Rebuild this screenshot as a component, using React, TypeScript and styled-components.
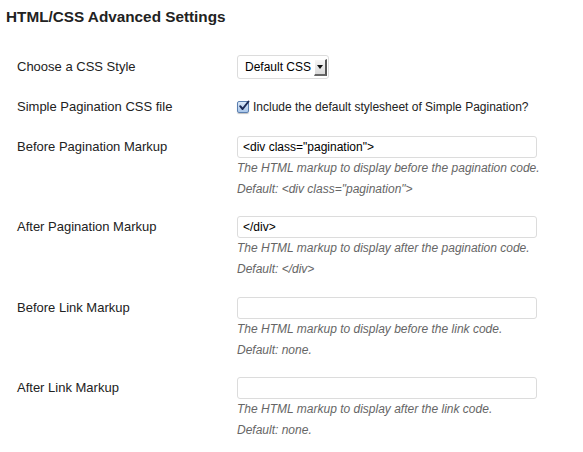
import React from 'react';
import styled, { createGlobalStyle } from 'styled-components';

const GlobalStyle = createGlobalStyle`
  body {
    margin: 0;
    background: #fff;
    font-family: 'Liberation Sans', Arial, sans-serif;
    color: #222;
  }
`;

const Page = styled.div`
  width: 583px;
  height: 452px;
  padding: 6px 6px 0 6px;
  box-sizing: border-box;
  overflow: hidden;
`;

const Title = styled.h3`
  margin: 0 0 19px 0;
  font-size: 15.3px;
  line-height: 22px;
  font-weight: 700;
  color: #222;
`;

const Row = styled.div`
  display: grid;
  grid-template-columns: 231px 1fr;
  padding: 8px 0 8.4px;
`;

const Label = styled.div<{ $lh?: number }>`
  padding-left: 11px;
  font-size: 13px;
  line-height: ${(p) => p.$lh ?? 22}px;
  color: #222;
`;

const Field = styled.div`
  display: flex;
  flex-direction: column;
`;

const SelectBox = styled.div`
  display: inline-flex;
  align-items: center;
  align-self: flex-start;
  height: 24px;
  box-sizing: border-box;
  padding: 0 1px 0 7px;
  border: 1px solid #dcdcdc;
  border-radius: 3px;
  background: #fff;
  font-size: 12px;
  color: #000;
  gap: 3px;
`;

const Arrow = styled.span`
  width: 13px;
  height: 17px;
  box-sizing: border-box;
  display: flex;
  align-items: center;
  justify-content: center;
  background: linear-gradient(#f6f6f6, #d9d9d9);
  border-right: 2px solid #555;
  border-bottom: 2px solid #666;
  border-top: 1px solid #fff;
  border-left: 1px solid #fff;
`;

const CheckLine = styled.label`
  display: flex;
  align-items: center;
  gap: 4px;
  height: 24px;
  font-size: 12px;
  color: #222;
`;

const CheckBox = styled.span`
  width: 12px;
  height: 12px;
  box-sizing: border-box;
  border: 1px solid #5b7fb0;
  border-radius: 2px;
  background: linear-gradient(#dbe8f8, #a9c6ea);
  position: relative;
  box-shadow: 0 1px 1px rgba(0, 0, 0, 0.25);
`;

const TextInput = styled.input`
  width: 300px;
  height: 22px;
  box-sizing: border-box;
  margin: 0;
  padding: 0 5px;
  border: 1px solid #dcdcdc;
  border-radius: 3px;
  font-family: 'Liberation Sans', Arial, sans-serif;
  font-size: 12px;
  color: #000;
  background: #fff;
  outline: none;
`;

const Description = styled.p`
  margin: 0;
  font-size: 12px;
  line-height: 21px;
  font-style: italic;
  color: #666;
`;

type MarkupRow = {
  label: string;
  value: string;
  text: string;
  def: string;
};

const rows: MarkupRow[] = [
  {
    label: 'Before Pagination Markup',
    value: '<div class="pagination">',
    text: 'The HTML markup to display before the pagination code.',
    def: 'Default: <div class="pagination">',
  },
  {
    label: 'After Pagination Markup',
    value: '</div>',
    text: 'The HTML markup to display after the pagination code.',
    def: 'Default: </div>',
  },
  {
    label: 'Before Link Markup',
    value: '',
    text: 'The HTML markup to display before the link code.',
    def: 'Default: none.',
  },
  {
    label: 'After Link Markup',
    value: '',
    text: 'The HTML markup to display after the link code.',
    def: 'Default: none.',
  },
];

export default function App() {
  return (
    <>
      <GlobalStyle />
      <Page>
        <Title>HTML/CSS Advanced Settings</Title>

        <Row>
          <Label $lh={24}>Choose a CSS Style</Label>
          <Field>
            <SelectBox>
              Default CSS
              <Arrow>
                <svg width="6" height="4" viewBox="0 0 6 4">
                  <path d="M0 0 L6 0 L3 4 Z" fill="#111" />
                </svg>
              </Arrow>
            </SelectBox>
          </Field>
        </Row>

        <Row>
          <Label $lh={24}>Simple Pagination CSS file</Label>
          <Field>
            <CheckLine>
              <CheckBox>
                <svg
                  width="12"
                  height="12"
                  viewBox="0 0 12 12"
                  style={{ position: 'absolute', left: 0, top: -2 }}
                >
                  <path
                    d="M2.2 6.2 L4.6 9 L10.5 1.5"
                    fill="none"
                    stroke="#1c2a55"
                    strokeWidth="2"
                    strokeLinecap="round"
                    strokeLinejoin="round"
                  />
                </svg>
              </CheckBox>
              Include the default stylesheet of Simple Pagination?
            </CheckLine>
          </Field>
        </Row>

        {rows.map((r) => (
          <Row key={r.label}>
            <Label>{r.label}</Label>
            <Field>
              <TextInput type="text" defaultValue={r.value} />
              <Description>{r.text}</Description>
              <Description>{r.def}</Description>
            </Field>
          </Row>
        ))}
      </Page>
    </>
  );
}
